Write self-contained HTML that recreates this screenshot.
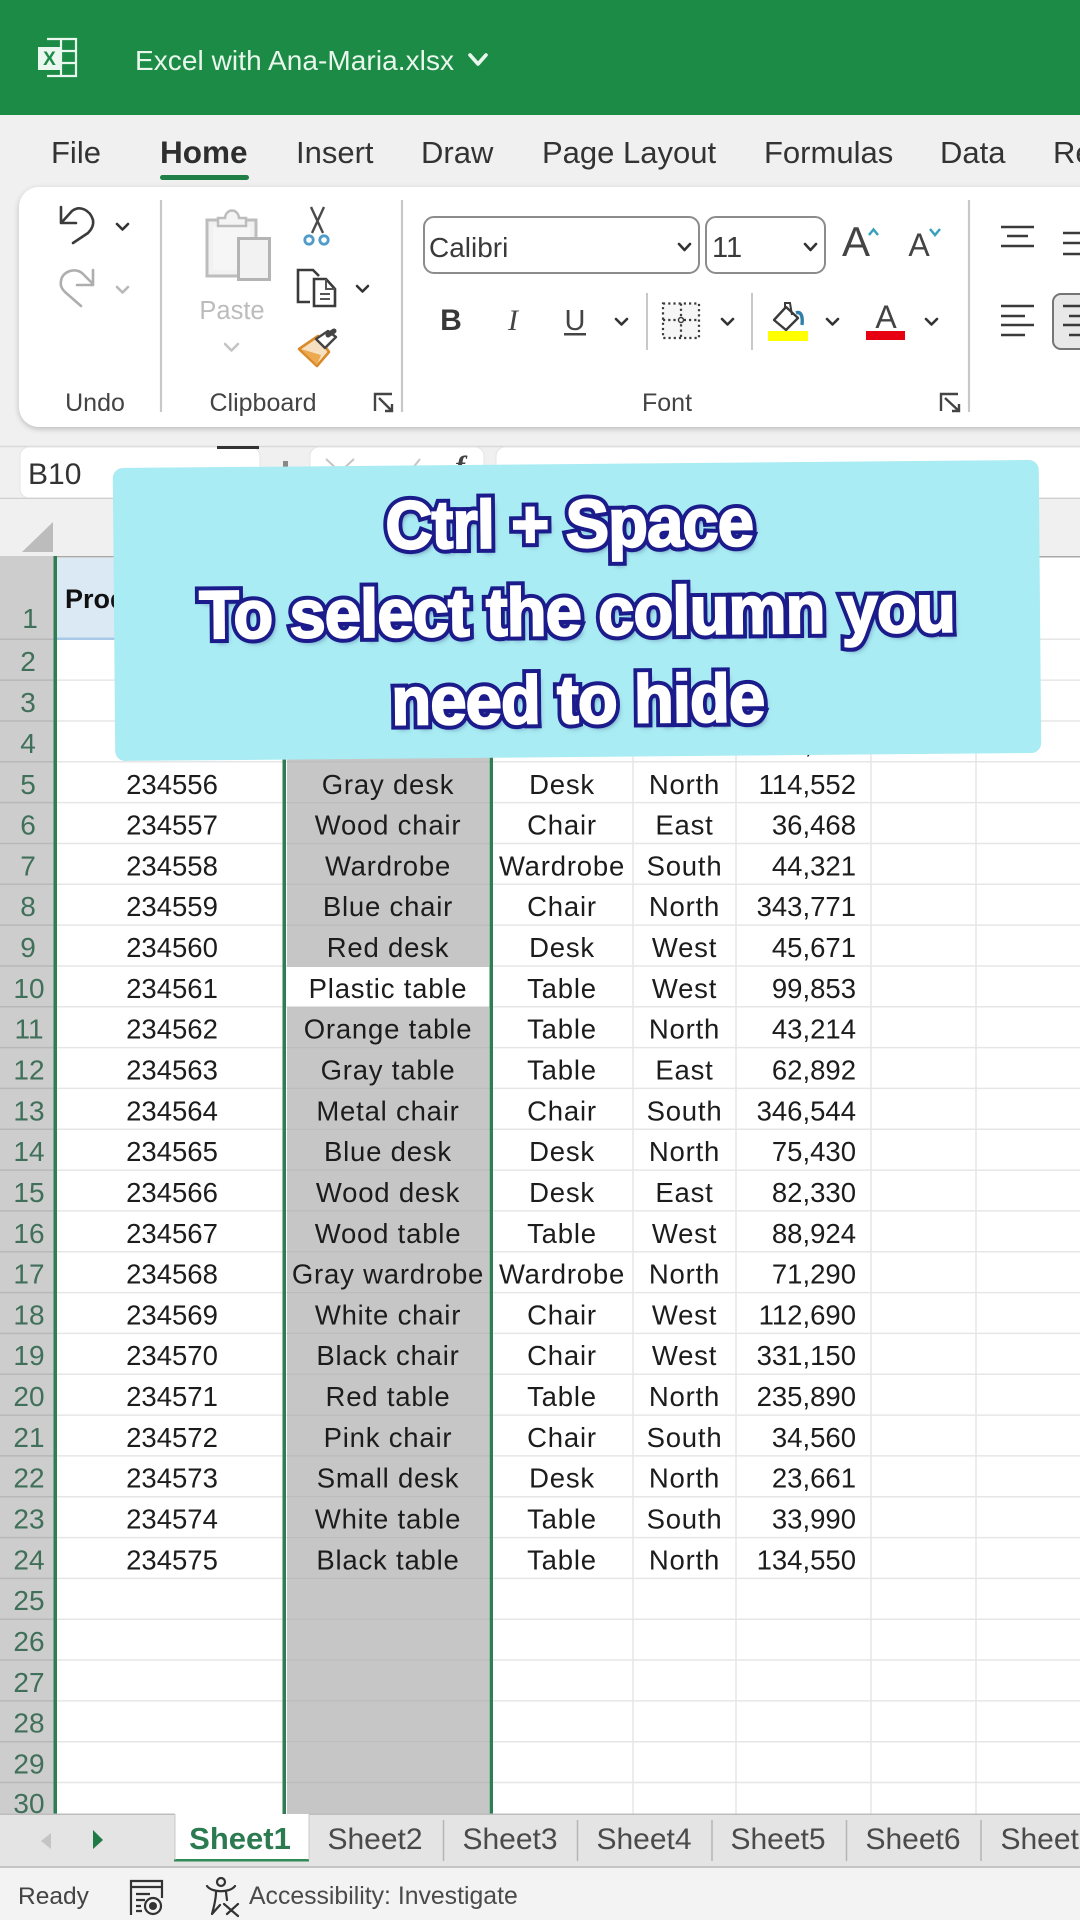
<!DOCTYPE html>
<html lang="en"><head><meta charset="utf-8"><title>Excel with Ana-Maria.xlsx</title>
<style>
html,body{margin:0;padding:0;width:1080px;height:1920px;overflow:hidden;background:#fff}
svg{display:block;position:absolute;left:0;top:0}
text{font-family:"Liberation Sans",sans-serif}
.i{font-size:27.5px;fill:#1c1c1c;text-anchor:middle}
.c{font-size:27.5px;fill:#1c1c1c;text-anchor:middle;letter-spacing:.8px}
.r{font-size:27.5px;fill:#1c1c1c;text-anchor:end}
.n{font-size:28px;fill:#41705a;text-anchor:middle}
.t{font-size:31px;fill:#333}
.l{font-size:25px;fill:#444;text-anchor:middle}
.s{font-size:30px;fill:#4a4a4a;text-anchor:middle}
.ch{fill:none;stroke:#333;stroke-width:2.6;stroke-linecap:round;stroke-linejoin:round}
.g{stroke:#e6e6e6;stroke-width:1.5}
.h{stroke:#b8b8b8;stroke-width:1.5}
#ov{position:absolute;left:114px;top:464px;width:926px;height:293px;background:#a9ecf3;border-radius:10px;transform:rotate(-.5deg);transform-origin:50% 50%}
.o{position:absolute;left:0;width:926px;text-align:center;font:bold 68px/88px "Liberation Sans",sans-serif;letter-spacing:-1px;white-space:nowrap;transform:scaleX(.96);transform-origin:50% 50%}
.a{color:#1b1b8b;-webkit-text-stroke:10px #1b1b8b;text-shadow:3px 4px 6px rgba(10,10,90,.55)}
.b{color:#fff;-webkit-text-stroke:2px #fff}
</style></head><body>
<svg width="1080" height="1920" viewBox="0 0 1080 1920" xmlns="http://www.w3.org/2000/svg">
<defs><filter id="sh" x="-5%" y="-10%" width="110%" height="120%"><feDropShadow dx="0" dy="2" stdDeviation="3" flood-color="#000" flood-opacity=".22"/></filter></defs>
<!-- top -->
<rect width="1080" height="1920" fill="#fff"/>
<rect width="1080" height="556" fill="#f0f0f0"/>
<rect width="1080" height="115" fill="#1b8b45"/>
<g fill="none" stroke="#e9f7ee" stroke-width="2.2">
<path d="M47 39H76V76H47M47 51H76M47 63H76M61 39V76"/></g>
<rect x="38" y="47" width="23" height="23" fill="#e9f7ee"/>
<text x="49.5" y="65" font-size="19" font-weight="700" fill="#1b8b45" text-anchor="middle">X</text>
<text x="135" y="70" font-size="28" fill="#e8f6ec" textLength="319">Excel with Ana-Maria.xlsx</text>
<path d="M470 55L478 64L486 55" fill="none" stroke="#e8f6ec" stroke-width="3.6" stroke-linecap="round" stroke-linejoin="round"/>
<!-- tabs -->
<text class="t" x="51" y="163">File</text>
<text class="t" x="160" y="163" font-weight="700" style="font-size:31.5px;fill:#2e2e2e">Home</text>
<rect x="160" y="175" width="89" height="5" rx="2.5" fill="#1f7f47"/>
<text class="t" x="296" y="163">Insert</text>
<text class="t" x="421" y="163">Draw</text>
<text class="t" x="542" y="163">Page Layout</text>
<text class="t" x="764" y="163">Formulas</text>
<text class="t" x="940" y="163">Data</text>
<text class="t" x="1053" y="163">Re</text>
<!-- ribbon -->
<rect x="19" y="187" width="1100" height="240" rx="20" fill="#fff" filter="url(#sh)"/>
<path d="M161 200V412M402 200V412M969 200V412" stroke="#c8c8c8" stroke-width="2.2"/>
<g fill="none" stroke="#3b3b3b" stroke-width="2.6" stroke-linecap="round" stroke-linejoin="round">
<path d="M61 207V223H76M62 222L72 211C80 205 90 210 93 220C94 226 91 230 88 233L73 243"/></g>
<path class="ch" d="M117 224L122.5 229.5L128 224"/>
<g fill="none" stroke="#aeaeae" stroke-width="2.6" stroke-linecap="round" stroke-linejoin="round">
<path d="M93 270V285H77M92 283L82 273C74 267 62 272 61 281C60 286 62 289 65 292L81 306"/></g>
<path class="ch" style="stroke:#b8b8b8" d="M117 287L122.5 292.5L128 287"/>
<!-- paste -->
<path d="M207 220H256V276H207Z" fill="#f1f1f1" stroke="#bdbdbd" stroke-width="3"/>
<path d="M213 226H250V270H213Z" fill="#f6f6f6"/>
<path d="M218 226V218H225C226 208 238 208 239 218H246V226Z" fill="#f4f4f4" stroke="#bdbdbd" stroke-width="2.5"/>
<rect x="238.5" y="238.5" width="31" height="41" fill="#f2f2f2" stroke="#b4b4b4" stroke-width="3"/>
<text x="232" y="319" font-size="25.5" fill="#bcbcbc" text-anchor="middle">Paste</text>
<path class="ch" style="stroke:#c4c4c4" d="M225 344L231.5 350.5L238 344"/>
<!-- scissors -->
<path d="M311 207L323 233M324 207L312 233" stroke="#4a4a4a" stroke-width="2.4" fill="none"/>
<circle cx="309" cy="240" r="4.2" fill="none" stroke="#4f9cc9" stroke-width="2.8"/>
<circle cx="324" cy="240" r="4.2" fill="none" stroke="#4f9cc9" stroke-width="2.8"/>
<!-- copy -->
<path d="M310 302H298V270H313L319 276" fill="none" stroke="#3b3b3b" stroke-width="2.6"/>
<path d="M314 279H326L335 289V306H314Z" fill="#fff" stroke="#3b3b3b" stroke-width="2.6"/>
<path d="M326 279V289H335M320 294H330M320 299H330" fill="none" stroke="#555" stroke-width="2"/>
<path class="ch" d="M357 286L362.5 291.5L368 286"/>
<!-- painter -->
<path d="M299 349L318 336L329 352L317 366Z" fill="#f7e0bf" stroke="#d98a2b" stroke-width="2.6" stroke-linejoin="round"/>
<path d="M301 349L321 355L317 365Z" fill="#eda94f"/>
<path d="M316 339L328 331L336 337L325 348Z" fill="#fff" stroke="#444" stroke-width="2.4" stroke-linejoin="round"/>
<path d="M328 335L334 331" stroke="#444" stroke-width="5" stroke-linecap="round"/>
<text class="l" x="95" y="411">Undo</text>
<text class="l" x="263" y="411">Clipboard</text>
<text class="l" x="667" y="411">Font</text>
<g fill="none" stroke="#444" stroke-width="2.4">
<path d="M375 411V394H392M379 398L392 411M392 404V411H385"/>
<path d="M941 411V394H958M945 398L959 411M959 404V411H952"/></g>
<!-- font boxes -->
<rect x="424" y="217" width="275" height="56" rx="10" fill="#fff" stroke="#8c8c8c" stroke-width="2"/>
<rect x="706" y="217" width="119" height="56" rx="10" fill="#fff" stroke="#8c8c8c" stroke-width="2"/>
<text x="429" y="257" font-size="28" fill="#3a3a3a">Calibri</text>
<text x="712" y="257" font-size="29" fill="#3a3a3a">11</text>
<path class="ch" d="M679 244L684.5 250L690 244M805 244L810.5 250L816 244"/>
<text x="856" y="256" font-size="42" fill="#444" text-anchor="middle">A</text>
<text x="919" y="256" font-size="32" fill="#444" text-anchor="middle">A</text>
<path d="M869 235L873.5 229.5L878 235" fill="none" stroke="#3aa1bd" stroke-width="2.5"/>
<path d="M930 229L935 235L940 229" fill="none" stroke="#3aa1bd" stroke-width="2.5"/>
<text x="451" y="330" font-size="30" font-weight="700" fill="#383838" text-anchor="middle">B</text>
<text x="513" y="330" font-size="30" font-style="italic" fill="#444" text-anchor="middle" style="font-family:'Liberation Serif',serif">I</text>
<text x="575" y="330" font-size="29" fill="#444" text-anchor="middle">U</text>
<rect x="564" y="333" width="22" height="2.5" fill="#444"/>
<path class="ch" d="M616 319L621.5 324.5L627 319M722 319L727.5 324.5L733 319M827 319L832.5 324.5L838 319M926 319L931.5 324.5L937 319"/>
<path d="M647 293V350M752 293V350" stroke="#c8c8c8" stroke-width="2"/>
<rect x="664" y="304" width="34" height="33" fill="#f6f6f6"/>
<path d="M663 303.5H699V338H663ZM681 303.5V338M663 320H699" fill="none" stroke="#3a3a3a" stroke-width="2.2" stroke-dasharray="2.2 3"/>
<circle cx="681" cy="320" r="2.5" fill="#fff" stroke="#3a3a3a" stroke-width="1.5"/>
<path d="M774 320L786 307L798 318L786 330Z" fill="#fff" stroke="#3b3b3b" stroke-width="2.4" stroke-linejoin="round"/>
<path d="M785 308V303H790L792 315" fill="none" stroke="#3b3b3b" stroke-width="2"/>
<path d="M796 313C801 311 803 316 802 325" fill="none" stroke="#2f7fa8" stroke-width="3.4"/>
<rect x="768" y="331" width="40" height="10" fill="#ffff00"/>
<text x="886" y="328" font-size="32" fill="#444" text-anchor="middle">A</text>
<rect x="866" y="331" width="39" height="9" fill="#e60012"/>
<g stroke="#3a3a3a" stroke-width="2.4">
<path d="M1001 227H1034M1007 236H1028M1001 246H1034M1063 233H1080M1063 243H1080M1063 254H1080"/></g>
<rect x="1053" y="294" width="60" height="55" rx="8" fill="#e8e8e8" stroke="#757575" stroke-width="2"/>
<g stroke="#3a3a3a" stroke-width="2.4">
<path d="M1001 306H1034M1001 316H1025M1001 325H1034M1001 335H1025M1063 306H1080M1069 316H1080M1063 325H1080M1069 335H1080"/></g>
<!-- formula bar -->
<path d="M0 446.5H1080" stroke="#d9d9d9" stroke-width="1.5"/>
<rect x="20" y="447" width="240" height="51" rx="9" fill="#fff" stroke="#e4e4e4" stroke-width="1"/>
<rect x="217" y="446" width="42" height="3" fill="#333"/>
<text x="28" y="484" font-size="30" fill="#333">B10</text>
<rect x="283" y="461" width="5" height="8" fill="#888"/>
<rect x="310" y="447" width="174" height="51" rx="9" fill="#fff" stroke="#e4e4e4" stroke-width="1"/>
<path d="M326 459L338 470M354 459L342 470M412 469L420 459" stroke="#c4c4c4" stroke-width="2" fill="none"/>
<text x="455" y="476" font-size="30" font-style="italic" font-weight="700" fill="#444" style="font-family:'Liberation Serif',serif">f</text>
<rect x="496" y="447" width="600" height="51" rx="9" fill="#fff" stroke="#e4e4e4" stroke-width="1"/>
<text x="520" y="486" font-size="28" fill="#333">Plastic table</text>
<path d="M0 498.5H1080" stroke="#cfcfcf" stroke-width="1.5"/>
<rect y="499" width="1080" height="57" fill="#f0f0f0"/>
<rect x="0" y="556" width="1080" height="1.5" fill="#a8a8a8"/>
<path d="M53 522V552H22Z" fill="#bcbcbc"/>
<!-- grid -->
<rect x="57" y="558" width="1023" height="1258" fill="#fff"/>
<rect x="0" y="556" width="54" height="1260" fill="#cdcdcd"/>
<rect x="57" y="558" width="440" height="81" fill="#dbe9f5"/>
<rect x="57" y="637.5" width="440" height="2.5" fill="#a9c9e8"/>
<rect x="287" y="558" width="202" height="1258" fill="#c6c6c6"/>
<rect x="287" y="967" width="202" height="39.5" fill="#fff"/>
<g class="g"><path d="M633 558V1814M736 558V1814M871 558V1814M976 558V1814"/>
<path d="M497 639.3H1080M57 680.1H287M489 680.1H1080M57 721H287M489 721H1080M57 761.8H287M489 761.8H1080M57 802.6H287M489 802.6H1080M57 843.5H287M489 843.5H1080M57 884.3H287M489 884.3H1080M57 925.1H287M489 925.1H1080M57 966H287M489 966H1080M57 1006.8H287M489 1006.8H1080M57 1047.6H287M489 1047.6H1080M57 1088.4H287M489 1088.4H1080M57 1129.3H287M489 1129.3H1080M57 1170.1H287M489 1170.1H1080M57 1210.9H287M489 1210.9H1080M57 1251.8H287M489 1251.8H1080M57 1292.6H287M489 1292.6H1080M57 1333.4H287M489 1333.4H1080M57 1374.2H287M489 1374.2H1080M57 1415.1H287M489 1415.1H1080M57 1455.9H287M489 1455.9H1080M57 1496.7H287M489 1496.7H1080M57 1537.6H287M489 1537.6H1080M57 1578.4H287M489 1578.4H1080M57 1619.2H287M489 1619.2H1080M57 1660H287M489 1660H1080M57 1700.9H287M489 1700.9H1080M57 1741.7H287M489 1741.7H1080M57 1782.5H287M489 1782.5H1080"/></g>
<g stroke="#bcbcbc" stroke-width="1.2"><path d="M287 680.1H489M287 721H489M287 761.8H489M287 802.6H489M287 843.5H489M287 884.3H489M287 925.1H489M287 1047.6H489M287 1088.4H489M287 1129.3H489M287 1170.1H489M287 1210.9H489M287 1251.8H489M287 1292.6H489M287 1333.4H489M287 1374.2H489M287 1415.1H489M287 1455.9H489M287 1496.7H489M287 1537.6H489M287 1578.4H489M287 1619.2H489M287 1660H489M287 1700.9H489M287 1741.7H489M287 1782.5H489"/></g>
<g class="h"><path d="M0 639.3H54M0 680.1H54M0 721H54M0 761.8H54M0 802.6H54M0 843.5H54M0 884.3H54M0 925.1H54M0 966H54M0 1006.8H54M0 1047.6H54M0 1088.4H54M0 1129.3H54M0 1170.1H54M0 1210.9H54M0 1251.8H54M0 1292.6H54M0 1333.4H54M0 1374.2H54M0 1415.1H54M0 1455.9H54M0 1496.7H54M0 1537.6H54M0 1578.4H54M0 1619.2H54M0 1660H54M0 1700.9H54M0 1741.7H54M0 1782.5H54"/></g>
<rect x="53.5" y="556" width="3.5" height="1260" fill="#2f7d53"/>
<rect x="282.5" y="556" width="3.5" height="1260" fill="#2f7d53"/>
<rect x="489.5" y="556" width="3.5" height="1260" fill="#2f7d53"/>
<text x="65" y="608" font-size="27" font-weight="700" fill="#111">Product ID</text>
<!-- row numbers -->
<text class="n" x="30" y="628">1</text><text class="n" x="28" y="671">2</text><text class="n" x="28" y="712">3</text><text class="n" x="28" y="753">4</text><text class="n" x="28" y="794">5</text><text class="n" x="28" y="834.5">6</text><text class="n" x="28" y="875.3">7</text><text class="n" x="28" y="916">8</text><text class="n" x="28" y="957">9</text><text class="n" x="29" y="998">10</text><text class="n" x="29" y="1038.6">11</text><text class="n" x="29" y="1079.4">12</text><text class="n" x="29" y="1120.3">13</text><text class="n" x="29" y="1161">14</text><text class="n" x="29" y="1202">15</text><text class="n" x="29" y="1242.8">16</text><text class="n" x="29" y="1283.6">17</text><text class="n" x="29" y="1324.4">18</text><text class="n" x="29" y="1365.2">19</text><text class="n" x="29" y="1406">20</text><text class="n" x="29" y="1447">21</text><text class="n" x="29" y="1487.7">22</text><text class="n" x="29" y="1528.6">23</text><text class="n" x="29" y="1569.4">24</text><text class="n" x="29" y="1610.2">25</text><text class="n" x="29" y="1651">26</text><text class="n" x="29" y="1692">27</text><text class="n" x="29" y="1732.7">28</text><text class="n" x="29" y="1773.5">29</text><text class="n" x="29" y="1813">30</text>
<!-- data -->
<text class="r" x="856" y="752.8">56,110</text>
<text class="i" x="172" y="794">234556</text><text class="c" x="388" y="794">Gray desk</text><text class="c" x="562" y="794">Desk</text><text class="c" x="684.5" y="794">North</text><text class="r" x="856" y="794">114,552</text>
<text class="i" x="172" y="834.5">234557</text><text class="c" x="388" y="834.5">Wood chair</text><text class="c" x="562" y="834.5">Chair</text><text class="c" x="684.5" y="834.5">East</text><text class="r" x="856" y="834.5">36,468</text>
<text class="i" x="172" y="875.3">234558</text><text class="c" x="388" y="875.3">Wardrobe</text><text class="c" x="562" y="875.3">Wardrobe</text><text class="c" x="684.5" y="875.3">South</text><text class="r" x="856" y="875.3">44,321</text>
<text class="i" x="172" y="916">234559</text><text class="c" x="388" y="916">Blue chair</text><text class="c" x="562" y="916">Chair</text><text class="c" x="684.5" y="916">North</text><text class="r" x="856" y="916">343,771</text>
<text class="i" x="172" y="957">234560</text><text class="c" x="388" y="957">Red desk</text><text class="c" x="562" y="957">Desk</text><text class="c" x="684.5" y="957">West</text><text class="r" x="856" y="957">45,671</text>
<text class="i" x="172" y="998">234561</text><text class="c" x="388" y="998">Plastic table</text><text class="c" x="562" y="998">Table</text><text class="c" x="684.5" y="998">West</text><text class="r" x="856" y="998">99,853</text>
<text class="i" x="172" y="1038.6">234562</text><text class="c" x="388" y="1038.6">Orange table</text><text class="c" x="562" y="1038.6">Table</text><text class="c" x="684.5" y="1038.6">North</text><text class="r" x="856" y="1038.6">43,214</text>
<text class="i" x="172" y="1079.4">234563</text><text class="c" x="388" y="1079.4">Gray table</text><text class="c" x="562" y="1079.4">Table</text><text class="c" x="684.5" y="1079.4">East</text><text class="r" x="856" y="1079.4">62,892</text>
<text class="i" x="172" y="1120.3">234564</text><text class="c" x="388" y="1120.3">Metal chair</text><text class="c" x="562" y="1120.3">Chair</text><text class="c" x="684.5" y="1120.3">South</text><text class="r" x="856" y="1120.3">346,544</text>
<text class="i" x="172" y="1161">234565</text><text class="c" x="388" y="1161">Blue desk</text><text class="c" x="562" y="1161">Desk</text><text class="c" x="684.5" y="1161">North</text><text class="r" x="856" y="1161">75,430</text>
<text class="i" x="172" y="1202">234566</text><text class="c" x="388" y="1202">Wood desk</text><text class="c" x="562" y="1202">Desk</text><text class="c" x="684.5" y="1202">East</text><text class="r" x="856" y="1202">82,330</text>
<text class="i" x="172" y="1242.8">234567</text><text class="c" x="388" y="1242.8">Wood table</text><text class="c" x="562" y="1242.8">Table</text><text class="c" x="684.5" y="1242.8">West</text><text class="r" x="856" y="1242.8">88,924</text>
<text class="i" x="172" y="1283.6">234568</text><text class="c" x="388" y="1283.6">Gray wardrobe</text><text class="c" x="562" y="1283.6">Wardrobe</text><text class="c" x="684.5" y="1283.6">North</text><text class="r" x="856" y="1283.6">71,290</text>
<text class="i" x="172" y="1324.4">234569</text><text class="c" x="388" y="1324.4">White chair</text><text class="c" x="562" y="1324.4">Chair</text><text class="c" x="684.5" y="1324.4">West</text><text class="r" x="856" y="1324.4">112,690</text>
<text class="i" x="172" y="1365.2">234570</text><text class="c" x="388" y="1365.2">Black chair</text><text class="c" x="562" y="1365.2">Chair</text><text class="c" x="684.5" y="1365.2">West</text><text class="r" x="856" y="1365.2">331,150</text>
<text class="i" x="172" y="1406">234571</text><text class="c" x="388" y="1406">Red table</text><text class="c" x="562" y="1406">Table</text><text class="c" x="684.5" y="1406">North</text><text class="r" x="856" y="1406">235,890</text>
<text class="i" x="172" y="1447">234572</text><text class="c" x="388" y="1447">Pink chair</text><text class="c" x="562" y="1447">Chair</text><text class="c" x="684.5" y="1447">South</text><text class="r" x="856" y="1447">34,560</text>
<text class="i" x="172" y="1487.7">234573</text><text class="c" x="388" y="1487.7">Small desk</text><text class="c" x="562" y="1487.7">Desk</text><text class="c" x="684.5" y="1487.7">North</text><text class="r" x="856" y="1487.7">23,661</text>
<text class="i" x="172" y="1528.6">234574</text><text class="c" x="388" y="1528.6">White table</text><text class="c" x="562" y="1528.6">Table</text><text class="c" x="684.5" y="1528.6">South</text><text class="r" x="856" y="1528.6">33,990</text>
<text class="i" x="172" y="1569.4">234575</text><text class="c" x="388" y="1569.4">Black table</text><text class="c" x="562" y="1569.4">Table</text><text class="c" x="684.5" y="1569.4">North</text><text class="r" x="856" y="1569.4">134,550</text>
<!-- tabs bar -->
<rect y="1814" width="1080" height="53" fill="#e4e4e4"/>
<rect y="1813.5" width="175" height="1.5" fill="#bdbdbd"/>
<rect x="309" y="1813.5" width="771" height="1.5" fill="#bdbdbd"/>
<rect y="1866" width="1080" height="2" fill="#c4c4c4"/>
<rect y="1868" width="1080" height="52" fill="#f3f3f3"/>
<path d="M51 1833V1849L41 1841Z" fill="#c4c4c4"/>
<path d="M93 1830V1849L103 1840Z" fill="#1f7a48"/>
<rect x="175" y="1814" width="134" height="46" fill="#fff"/>
<rect x="174" y="1859" width="135" height="2.5" fill="#2f8a57"/>
<path d="M175 1814V1860M309 1814V1860" stroke="#c9c9c9" stroke-width="1"/>
<text x="240" y="1849" font-size="31" font-weight="700" fill="#2c7b50" text-anchor="middle">Sheet1</text>
<text class="s" x="375" y="1849">Sheet2</text>
<text class="s" x="510" y="1849">Sheet3</text>
<text class="s" x="644" y="1849">Sheet4</text>
<text class="s" x="778" y="1849">Sheet5</text>
<text class="s" x="913" y="1849">Sheet6</text>
<text class="s" x="1048" y="1849">Sheet7</text>
<path d="M443.5 1820V1861M577.5 1820V1861M712 1820V1861M846.5 1820V1861M981 1820V1861" stroke="#b5b5b5" stroke-width="1.5"/>
<!-- status -->
<text x="18" y="1904" font-size="24.5" fill="#444">Ready</text>
<g fill="none" stroke="#333" stroke-width="2.2">
<path d="M131 1915V1881H162V1898M131 1887H162"/>
<circle cx="153" cy="1906" r="8"/>
<path d="M136 1894H150M136 1900H145M136 1906H141M136 1911H142"/></g>
<circle cx="153" cy="1906" r="4" fill="#333"/>
<g fill="none" stroke="#333" stroke-width="2.2" stroke-linecap="round" stroke-linejoin="round">
<circle cx="221" cy="1882" r="4"/>
<path d="M207 1886C212 1893 230 1893 235 1886M216 1892C216 1900 214 1906 212 1914L220 1905M226 1892L227 1900M224 1904L238 1916M238 1904L227 1914"/></g>
<text x="249" y="1904" font-size="24.8" fill="#4a4a4a">Accessibility: Investigate</text>
</svg>
<div id="ov">
<div class="o a" style="top:16px;left:-7px">Ctrl + Space</div>
<div class="o a" style="top:103.5px">To select the column you</div>
<div class="o a" style="top:191.5px">need to hide</div>
<div class="o b" style="top:16px;left:-7px">Ctrl + Space</div>
<div class="o b" style="top:103.5px">To select the column you</div>
<div class="o b" style="top:191.5px">need to hide</div>
</div>
</body></html>
